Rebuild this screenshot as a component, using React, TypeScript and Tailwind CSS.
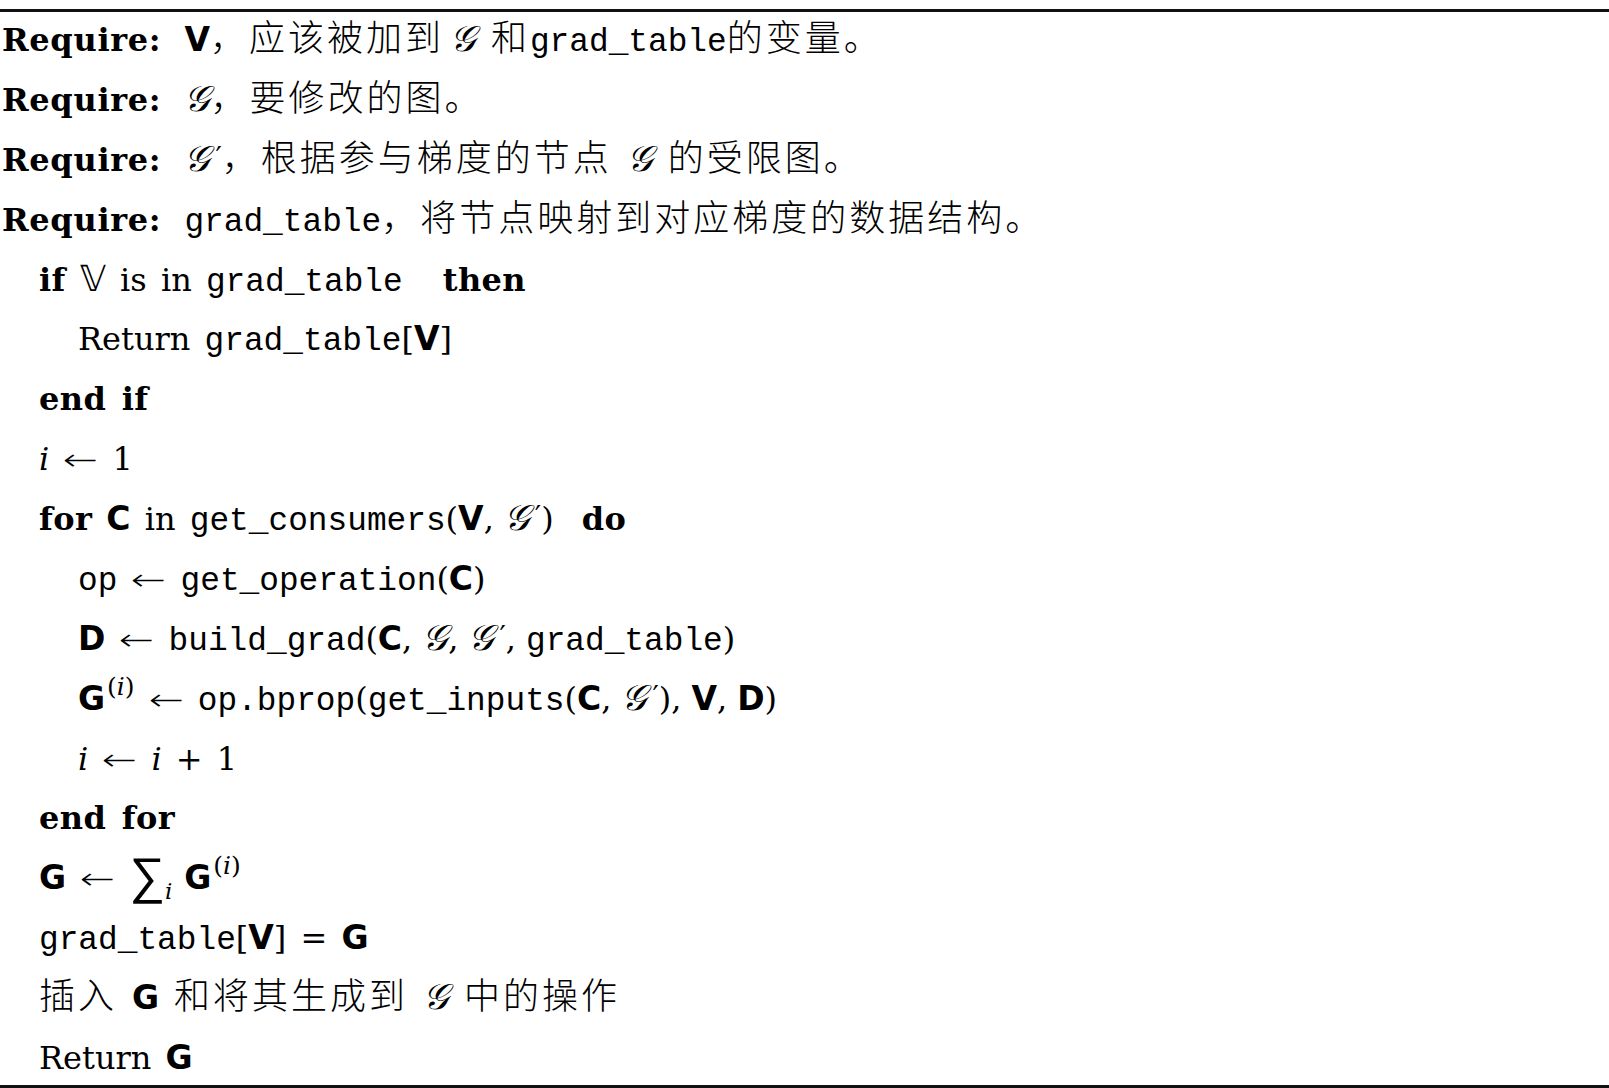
import React from 'react';

// algorithm listing: serif text, typewriter identifiers, bold sans variables
const serif = "font-['DejaVu_Serif','Noto_Sans_CJK_SC',serif] text-[32px]";

const Tt: React.FC<{ children: React.ReactNode }> = ({ children }) => (
  <span className="font-['Liberation_Mono',monospace] text-[32.8px] [word-spacing:0px]">{children}</span>
);

const B: React.FC<{ children: React.ReactNode }> = ({ children }) => (
  <span className="font-['DejaVu_Sans',sans-serif] font-bold text-[33px]">{children}</span>
);

const Zh: React.FC<{ children: React.ReactNode }> = ({ children }) => (
  <span className="font-['Noto_Sans_CJK_SC',sans-serif] text-[36px] tracking-[3px] font-light">{children}</span>
);

const Kw: React.FC<{ children: React.ReactNode }> = ({ children }) => (
  <span className="font-bold tracking-[0.4px]">{children}</span>
);

const Cal: React.FC<{ prime?: boolean }> = ({ prime }) => (
  <span className="font-['DejaVu_Serif',serif] italic text-[36px]">
    𝒢
    {prime && (
      <span className="not-italic font-['DejaVu_Sans',sans-serif] text-[28px] relative -top-[4px] ml-[5px]">′</span>
    )}
  </span>
);

const Sup: React.FC = () => (
  <sup className="font-['DejaVu_Serif',serif] text-[25px] ml-[2px] -top-[15px]">
    (<span className="italic">i</span>)
  </sup>
);

const Arrow = () => (
  <span className="inline-block font-['DejaVu_Sans',sans-serif] font-light text-[30px] scale-x-[1.4] mx-[19px]">←</span>
);

const Comma = () => <span className="mr-[10px]">,</span>;

const Line: React.FC<{ indent?: number; last?: boolean; children: React.ReactNode }> = ({ indent = 0, last, children }) => {
  const pad = indent === 0 ? 'pl-[2px]' : indent === 1 ? 'pl-[39px]' : 'pl-[78px]';
  return (
    <div
      className={`${pad} ${last ? 'h-[55px]' : 'h-[59.88px]'} leading-[56px] whitespace-nowrap [word-spacing:4px] [&_*]:leading-[0px]`}
    >
      {children}
    </div>
  );
};

const Req = () => <span className="font-bold tracking-[0.7px] mr-[23px]">Require:</span>;

export default function App() {
  return (
    <div className={`w-[1609px] h-[1088px] bg-white text-black overflow-hidden ${serif}`}>
      <div className="mt-[9px] border-t-[3px] border-b-[3px] border-[#111]">
        <Line>
          <Req />
          <B>V</B>
          <Zh>，应该被加到</Zh>
          <span className="ml-[6px]">
            <Cal />
          </span>
          <Zh> 和</Zh>
          <Tt>grad_table</Tt>
          <Zh>的变量。</Zh>
        </Line>
        <Line>
          <Req />
          <Cal />
          <Zh>，要修改的图。</Zh>
        </Line>
        <Line>
          <Req />
          <Cal prime />
          <Zh>，根据参与梯度的节点 </Zh>
          <Cal />
          <Zh> 的受限图。</Zh>
        </Line>
        <Line>
          <Req />
          <Tt>grad_table</Tt>
          <Zh>，将节点映射到对应梯度的数据结构。</Zh>
        </Line>
        <Line indent={1}>
          <Kw>if</Kw> <span className="font-['DejaVu_Sans',sans-serif] text-[36px] font-light">𝕍</span> is in{' '}
          <Tt>grad_table</Tt>
          <span className="ml-[40px]">
            <Kw>then</Kw>
          </span>
        </Line>
        <Line indent={2}>
          Return <Tt>grad_table</Tt>[<B>V</B>]
        </Line>
        <Line indent={1}>
          <Kw>end if</Kw>
        </Line>
        <Line indent={1}>
          <span className="italic">i</span>
          <Arrow />1
        </Line>
        <Line indent={1}>
          <Kw>for</Kw> <B>C</B> in <Tt>get_consumers</Tt>(<B>V</B>
          <Comma />
          <Cal prime />)
          <span className="ml-[28px]">
            <Kw>do</Kw>
          </span>
        </Line>
        <Line indent={2}>
          <Tt>op</Tt>
          <Arrow />
          <Tt>get_operation</Tt>(<B>C</B>)
        </Line>
        <Line indent={2}>
          <B>D</B>
          <Arrow />
          <Tt>build_grad</Tt>(<B>C</B>
          <Comma />
          <Cal />
          <Comma />
          <Cal prime />
          <Comma />
          <Tt>grad_table</Tt>)
        </Line>
        <Line indent={2}>
          <B>G</B>
          <Sup />
          <Arrow />
          <Tt>op.bprop</Tt>(<Tt>get_inputs</Tt>(<B>C</B>
          <Comma />
          <Cal prime />)
          <Comma />
          <B>V</B>
          <Comma />
          <B>D</B>)
        </Line>
        <Line indent={2}>
          <span className="italic">i</span>
          <Arrow />
          <span className="italic">i</span> + 1
        </Line>
        <Line indent={1}>
          <Kw>end for</Kw>
        </Line>
        <Line indent={1}>
          <B>G</B>
          <Arrow />
          <span className="font-['DejaVu_Sans',sans-serif] font-light text-[50px] relative top-[4px]">∑</span>
          <sub className="text-[23px] italic -bottom-[10px]">i</sub>
          <span className="ml-[12px]">
            <B>G</B>
          </span>
          <Sup />
        </Line>
        <Line indent={1}>
          <Tt>grad_table</Tt>[<B>V</B>] = <B>G</B>
        </Line>
        <Line indent={1}>
          <Zh>插入 </Zh>
          <B>G</B>
          <Zh> 和将其生成到 </Zh>
          <Cal />
          <Zh> 中的操作</Zh>
        </Line>
        <Line indent={1} last>
          Return <B>G</B>
        </Line>
      </div>
    </div>
  );
}
